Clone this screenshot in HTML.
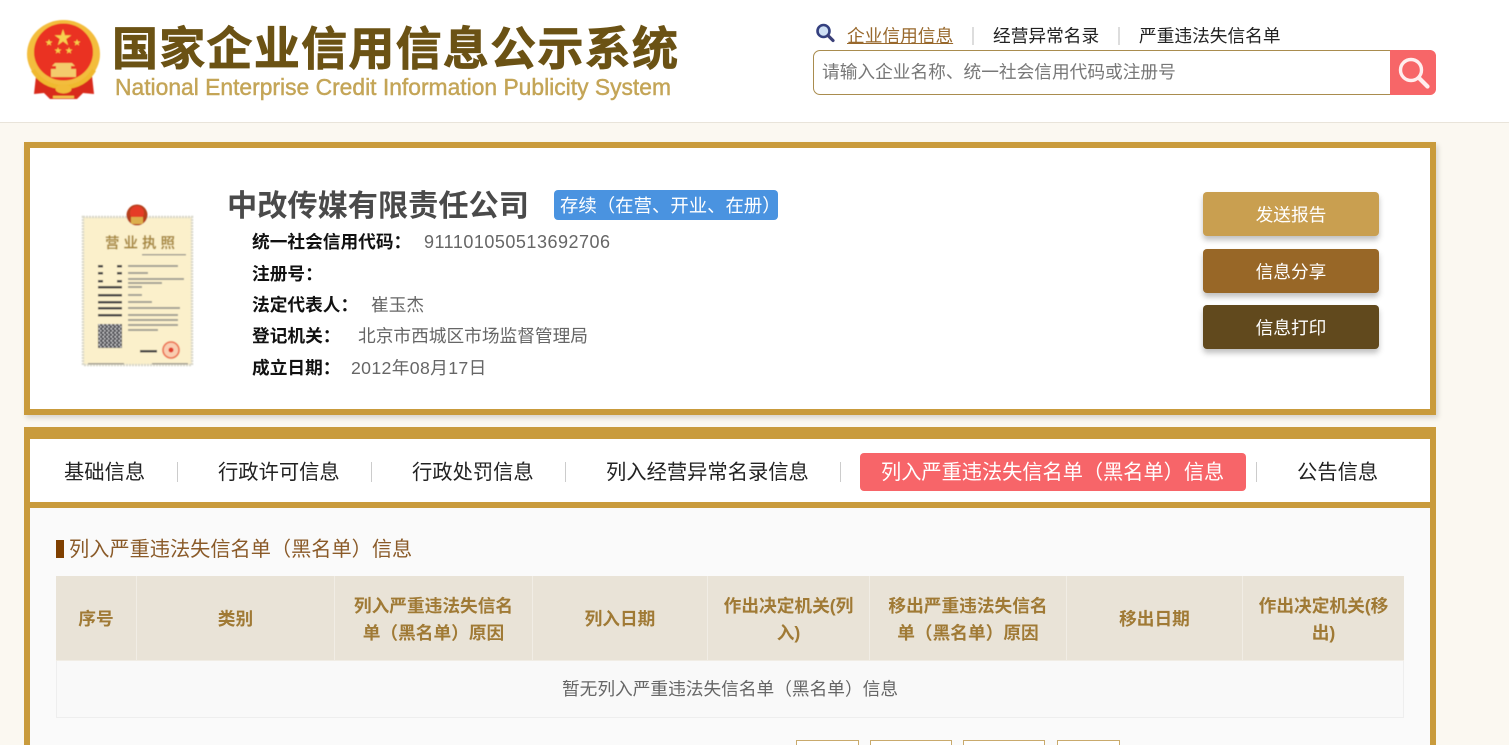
<!DOCTYPE html>
<html lang="zh-CN">
<head>
<meta charset="utf-8">
<title>国家企业信用信息公示系统</title>
<style>
html,body{margin:0;padding:0;width:1509px;height:745px;overflow:hidden;background:#fbf8f1;}
body{position:relative;font-family:"Liberation Sans","Noto Sans CJK SC",sans-serif;font-size:17.7px;color:#333;}
.a{position:absolute;white-space:nowrap;}
.t{position:absolute;white-space:nowrap;line-height:24px;height:24px;}
.b{font-weight:bold;color:#111;}
.v{color:#666;}
.btn{position:absolute;left:1203px;width:176px;height:44px;line-height:46px;text-align:center;color:#fff;border-radius:4px;box-shadow:0 4px 6px rgba(0,0,0,.25);}
.sep{position:absolute;width:1px;background:#ccc;}
.tab{position:absolute;top:460px;font-size:20.3px;line-height:26px;color:#222;white-space:nowrap;}
.th{position:absolute;top:576px;height:84px;display:flex;align-items:center;justify-content:center;text-align:center;font-weight:bold;color:#a07a35;line-height:27px;box-sizing:border-box;padding:3px 12px 0;border-right:1px solid #f1ede5;}
.pg{position:absolute;top:740px;height:30px;border:1px solid #c9aa6c;box-sizing:border-box;background:#fff;}
</style>
</head>
<body>
<div class="a" style="left:0;top:0;width:1509px;height:122px;background:#fff;border-bottom:1px solid #e9e4da;"></div>

<svg class="a" style="left:24px;top:18px" width="80" height="84" viewBox="0 0 80 84">
  <defs><filter id="bm"><feGaussianBlur stdDeviation=".45"/></filter></defs>
  <g filter="url(#bm)">
    <path d="M12 58L10 76 20 75 26 81H53L59 75 70 76 68 58Z" fill="#d92a1c"/>
    <ellipse cx="39.500" cy="36" rx="36.500" ry="34" fill="#f3bd3c"/>
    <ellipse cx="39.500" cy="34" rx="29.500" ry="28.500" fill="#ea3220"/>
    <path d="M39 11l2 6.200h6.500l-5.300 3.800 2 6.300-5.200-3.900-5.200 3.900 2-6.300-5.300-3.800h6.500z" fill="#f7d04f"/>
    <path d="M25 21l.9 2.500h2.600l-2.100 1.600.8 2.500-2.200-1.500-2.200 1.500.8-2.500-2.100-1.600h2.600zM53 21l.9 2.500h2.600l-2.100 1.600.8 2.500-2.200-1.500-2.200 1.500.8-2.500-2.100-1.600h2.600zM34 29l.9 2.500h2.600l-2.100 1.600.8 2.500-2.200-1.500-2.200 1.500.8-2.500-2.100-1.600h2.600zM45 29l.9 2.500h2.600l-2.100 1.600.8 2.500-2.200-1.500-2.200 1.500.8-2.500-2.100-1.600h2.600z" fill="#f7cf4c"/>
    <path d="M31 45h17l3 3H28zM32 48h15v3H32zM27 51h25v8H27z" fill="#f4cb6c"/>
    <path d="M9 52C15 62 25 69 39.500 69 54 69 64 62 70 52" fill="none" stroke="#f0b92e" stroke-width="4.500"/>
    <ellipse cx="39.500" cy="71" rx="8" ry="4.500" fill="#f2bb38"/>
    <path d="M29 79h21" stroke="#f4c74e" stroke-width="2.500"/>
  </g>
</svg>

<svg class="a" style="left:110px;top:15px" width="580" height="95" viewBox="0 0 580 95">
  <text x="2" y="50" font-family="'Noto Sans CJK SC',sans-serif" font-size="46" font-weight="bold" fill="#6b5214" textLength="566" lengthAdjust="spacing" stroke="#6b5214" stroke-width=".8">国家企业信用信息公示系统</text>
  <text x="5" y="80" font-family="'Liberation Sans',sans-serif" font-size="23.500" fill="#c4a557" textLength="556" lengthAdjust="spacingAndGlyphs" stroke="#c4a557" stroke-width=".45">National Enterprise Credit Information Publicity System</text>
</svg>

<svg class="a" style="left:815px;top:23px" width="21" height="20" viewBox="0 0 21 20">
  <circle cx="8.500" cy="8" r="6" fill="#cfe0f4" stroke="#34407f" stroke-width="2.600"/>
  <path d="M13 12.500l5 5" stroke="#3a3f78" stroke-width="3.200" stroke-linecap="round"/>
</svg>
<div class="t" style="left:847px;top:24px;color:#98682c;text-decoration:underline;">企业信用信息</div>
<div class="sep" style="left:972px;top:27px;height:18px;width:2px;background:#ddd;"></div>
<div class="t" style="left:993px;top:24px;color:#222;">经营异常名录</div>
<div class="sep" style="left:1118px;top:27px;height:18px;width:2px;background:#ddd;"></div>
<div class="t" style="left:1139px;top:24px;color:#222;">严重违法失信名单</div>

<div class="a" style="left:813px;top:50px;width:623px;height:45px;box-sizing:border-box;border:1px solid #a98c4e;border-radius:7px;background:#fff;"></div>
<div class="t" style="left:822px;top:60px;color:#777;">请输入企业名称、统一社会信用代码或注册号</div>
<div class="a" style="left:1390px;top:50px;width:46px;height:45px;background:#f76668;border-radius:0 6px 6px 0;"></div>
<svg class="a" style="left:1390px;top:50px" width="46" height="45" viewBox="0 0 46 45">
  <circle cx="21" cy="20" r="10.500" fill="none" stroke="#ffeeee" stroke-width="3.400"/>
  <path d="M29 28l8.500 8.500" stroke="#ffeeee" stroke-width="4.200" stroke-linecap="round"/>
</svg>

<!-- Company panel -->
<div class="a" style="left:24px;top:142px;width:1412px;height:273px;box-sizing:border-box;border:6px solid #c99b3c;background:#fff;box-shadow:2px 3px 5px rgba(0,0,0,.14);"></div>

<svg class="a" style="left:80px;top:202px" width="114" height="172" viewBox="0 0 114 172">
  <defs>
    <filter id="bl"><feGaussianBlur stdDeviation=".6"/></filter>
    <pattern id="qr" width="4" height="4" patternUnits="userSpaceOnUse">
      <rect width="4" height="4" fill="#55555a"/>
      <rect x="0" y="0" width="1.500" height="1.500" fill="#c4c4c6"/>
      <rect x="2.500" y="2" width="1.500" height="1.500" fill="#d0d0d2"/>
    </pattern>
  </defs>
  <g filter="url(#bl)">
    <rect x="3" y="15" width="109" height="148" fill="#fbf0cb" stroke="#d9d8cb" stroke-width="2.500" stroke-dasharray="2 1"/>
    <circle cx="57" cy="13" r="10.500" fill="#b5411e"/>
    <circle cx="57" cy="11" r="7" fill="#e53a26"/>
    <rect x="51" y="15" width="12" height="7" fill="#dcae4b"/>
    <g fill="#444">
      <rect x="18" y="63" width="5" height="2.500"/><rect x="37" y="63" width="5" height="2.500"/>
      <rect x="18" y="70" width="5" height="2.500"/><rect x="37" y="70" width="5" height="2.500"/>
      <rect x="18" y="78" width="5" height="2.500"/><rect x="37" y="78" width="5" height="2.500"/>
      <rect x="18" y="84" width="24" height="2.500"/><rect x="18" y="92" width="24" height="2.500"/>
      <rect x="18" y="99" width="24" height="2.500"/><rect x="18" y="105" width="24" height="2.500"/>
      <rect x="18" y="112" width="24" height="2.500"/>
      <rect x="60" y="148" width="17" height="2.500"/>
    </g>
    <g fill="#a5a296">
      <rect x="48" y="63" width="50" height="2"/><rect x="48" y="70" width="20" height="2"/>
      <rect x="48" y="76" width="56" height="2"/><rect x="48" y="80" width="34" height="2"/>
      <rect x="48" y="84" width="14" height="2"/><rect x="48" y="92" width="14" height="2"/>
      <rect x="48" y="99" width="24" height="2"/><rect x="48" y="105" width="52" height="2"/>
      <rect x="48" y="112" width="50" height="2"/><rect x="48" y="117" width="50" height="2"/>
      <rect x="48" y="122" width="50" height="2"/><rect x="48" y="127" width="30" height="2"/>
      <rect x="62" y="52" width="44" height="1.500"/>
      <rect x="8" y="161" width="36" height="1.500"/><rect x="72" y="161" width="36" height="1.500"/>
    </g>
    <rect x="18" y="122" width="24" height="24" fill="url(#qr)"/>
    <circle cx="91" cy="148" r="8" fill="#f9cdb0" stroke="#ee7a5a" stroke-width="1.800"/>
    <circle cx="91" cy="148" r="2.500" fill="#e23d2c"/>
    <text x="25" y="46" font-family="'Noto Sans CJK SC',sans-serif" font-size="14.500" font-weight="bold" fill="#a98a40" textLength="70" lengthAdjust="spacing">营业执照</text>
  </g>
</svg>

<div class="a" style="left:227px;top:186px;font-size:30.200px;font-weight:bold;line-height:42px;color:#4a4a4a;">中改传媒有限责任公司</div>
<div class="a" style="left:554px;top:190px;width:224px;height:30px;background:#4a93e0;border-radius:4px;"></div>
<div class="a" style="left:560px;top:193px;font-size:18.400px;line-height:26px;color:#fff;">存续（在营、开业、在册）</div>

<div class="t b" style="left:252px;top:230px;">统一社会信用代码：</div>
<div class="t v" style="left:424px;top:230px;font-size:18px;letter-spacing:.5px;">911101050513692706</div>
<div class="t b" style="left:252px;top:262px;">注册号：</div>
<div class="t b" style="left:252px;top:293px;">法定代表人：</div>
<div class="t v" style="left:371px;top:293px;">崔玉杰</div>
<div class="t b" style="left:252px;top:324px;">登记机关：</div>
<div class="t v" style="left:358px;top:324px;">北京市西城区市场监督管理局</div>
<div class="t b" style="left:252px;top:356px;">成立日期：</div>
<div class="t v" style="left:351px;top:356px;letter-spacing:.35px;">2012年08月17日</div>

<div class="btn" style="top:192px;background:#c99f50;">发送报告</div>
<div class="btn" style="top:249px;background:#986727;">信息分享</div>
<div class="btn" style="top:305px;background:#61491d;">信息打印</div>

<!-- Tabs panel -->
<div class="a" style="left:24px;top:427px;width:1412px;height:330px;box-sizing:border-box;border:6px solid #c99b3c;border-top-width:12px;background:#fafafa;"></div>
<div class="a" style="left:30px;top:439px;width:1400px;height:63px;background:#fff;"></div>
<div class="a" style="left:30px;top:502px;width:1400px;height:6px;background:#c99b3c;"></div>

<div class="tab" style="left:64px;">基础信息</div>
<div class="sep" style="left:177px;top:462px;height:20px;"></div>
<div class="tab" style="left:218px;">行政许可信息</div>
<div class="sep" style="left:371px;top:462px;height:20px;"></div>
<div class="tab" style="left:412px;">行政处罚信息</div>
<div class="sep" style="left:565px;top:462px;height:20px;"></div>
<div class="tab" style="left:606px;">列入经营异常名录信息</div>
<div class="sep" style="left:840px;top:462px;height:20px;"></div>
<div class="a" style="left:860px;top:453px;width:386px;height:38px;background:#f76569;border-radius:4px;"></div>
<div class="tab" style="left:881px;color:#fff;font-size:20.2px;">列入严重违法失信名单（黑名单）信息</div>
<div class="sep" style="left:1256px;top:462px;height:20px;"></div>
<div class="tab" style="left:1297px;">公告信息</div>

<div class="a" style="left:56px;top:540px;width:8px;height:18px;background:#7f3f00;"></div>
<div class="a" style="left:69px;top:537px;font-size:20.200px;line-height:26px;color:#8a5a28;">列入严重违法失信名单（黑名单）信息</div>

<div class="a" style="left:56px;top:576px;width:1348px;height:142px;box-sizing:border-box;border:1px solid #eee;background:#f9f9f9;"></div>
<div class="a" style="left:56px;top:576px;width:1348px;height:85px;background:#e9e3d7;border-bottom:1px solid #f1ede5;box-sizing:border-box;"></div>
<div class="th" style="left:56px;width:81px;">序号</div>
<div class="th" style="left:137px;width:198px;">类别</div>
<div class="th" style="left:335px;width:198px;">列入严重违法失信名单（黑名单）原因</div>
<div class="th" style="left:533px;width:175px;">列入日期</div>
<div class="th" style="left:708px;width:162px;">作出决定机关(列入)</div>
<div class="th" style="left:870px;width:197px;">移出严重违法失信名单（黑名单）原因</div>
<div class="th" style="left:1067px;width:176px;">移出日期</div>
<div class="th" style="left:1243px;width:161px;border-right:0;">作出决定机关(移出)</div>
<div class="a" style="left:56px;top:677px;width:1348px;text-align:center;line-height:24px;color:#666;">暂无列入严重违法失信名单（黑名单）信息</div>

<div class="pg" style="left:796px;width:63px;"></div>
<div class="pg" style="left:870px;width:82px;"></div>
<div class="pg" style="left:963px;width:82px;"></div>
<div class="pg" style="left:1057px;width:63px;"></div>
</body>
</html>
